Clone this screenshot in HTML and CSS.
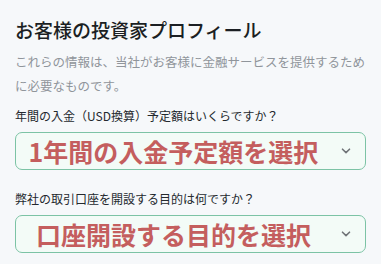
FILE: index.html
```html
<!DOCTYPE html>
<html lang="ja">
<head>
  <meta charset="UTF-8" />
  <title>お客様の投資家プロフィール</title>
  <link rel="stylesheet" href="styles.css">
</head>
<body>
  <div class="profile">
    <h2 class="profile-title">お客様の投資家プロフィール</h2>
    <p class="profile-note">これらの情報は、当社がお客様に金融サービスを提供するために必要なものです。</p>

    <div class="field">
      <p class="field-label">年間の入金（USD換算）予定額はいくらですか？</p>
      <div class="select-box">
        <span class="select-text">1年間の入金予定額を選択</span>
        <svg class="chevron" width="10" height="6" viewBox="0 0 10 6"><path d="M1.5 1.2 L5 4.6 L8.5 1.2" fill="none" stroke="#707478" stroke-width="1.6" stroke-linecap="round" stroke-linejoin="round"/></svg>
      </div>
    </div>

    <div class="field">
      <p class="field-label">弊社の取引口座を開設する目的は何ですか？</p>
      <div class="select-box">
        <span class="select-text">口座開設する目的を選択</span>
        <svg class="chevron" width="10" height="6" viewBox="0 0 10 6"><path d="M1.5 1.2 L5 4.6 L8.5 1.2" fill="none" stroke="#707478" stroke-width="1.6" stroke-linecap="round" stroke-linejoin="round"/></svg>
      </div>
    </div>
  </div>
</body>
</html>
```

FILE: styles.css
```css
:root {
  --page-bg:    #f6f8fa;
  --title:      #1b1f23;
  --muted:      #90959b;
  --label:      #24292e;
  --box-border: #7cc3a5;
  --box-bg:     #f3fbf7;
  --box-text:   #c45e5e;
}

body {
  margin: 0;
  background: var(--page-bg);
  font-family: "Noto Sans CJK JP", "Noto Sans", sans-serif;
}

.profile {
  padding: 15px 15px 0 15px;
}

.profile-title {
  margin: 0;
  font-size: 19px;
  font-weight: 500;
  line-height: 30px;
  color: var(--title);
}

.profile-note {
  margin: 5px 0 0;
  font-size: 12.5px;
  line-height: 24px;
  color: var(--muted);
}

.field { margin-top: 8px; }
.field + .field { margin-top: 19px; }

.field-label {
  margin: 0 0 6px;
  font-size: 12px;
  line-height: 20px;
  color: var(--label);
}

.select-box {
  display: flex;
  align-items: center;
  height: 38px;
  box-sizing: border-box;
  padding: 0 14px 0 12px;
  border: 1.5px solid var(--box-border);
  border-radius: 7px;
  background: var(--box-bg);
}

.select-text {
  flex: 1;
  text-align: center;
  padding-right: 22px;
  font-size: 25px;
  font-weight: 700;
  color: var(--box-text);
  white-space: nowrap;
}

.chevron { flex: none; }
```
